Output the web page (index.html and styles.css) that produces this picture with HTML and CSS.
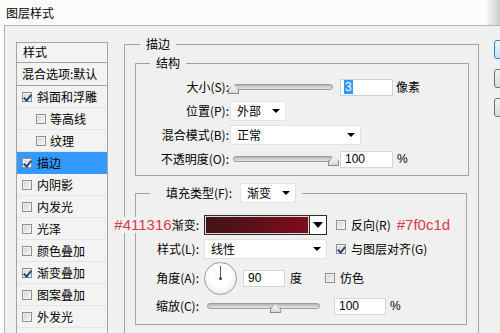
FILE: index.html
```html
<!DOCTYPE html>
<html lang="zh-CN">
<head>
  <meta charset="UTF-8">
  <title>图层样式</title>
  <link rel="stylesheet" href="styles.css">
</head>
<body>
  <div class="titlebar">
    <span class="title">图层样式</span>
    <span class="title-shade"></span>
  </div>

  <div class="dialog">
    <!-- style list -->
    <div class="style-list">
      <div class="list-head">样式</div>
      <div class="list-blend">混合选项:默认</div>
      <div class="list-row"><span class="cb on"></span>斜面和浮雕</div>
      <div class="list-row sub"><span class="cb"></span>等高线</div>
      <div class="list-row sub"><span class="cb"></span>纹理</div>
      <div class="list-row active"><span class="cb on"></span>描边</div>
      <div class="list-row"><span class="cb"></span>内阴影</div>
      <div class="list-row"><span class="cb"></span>内发光</div>
      <div class="list-row"><span class="cb"></span>光泽</div>
      <div class="list-row"><span class="cb"></span>颜色叠加</div>
      <div class="list-row"><span class="cb on"></span>渐变叠加</div>
      <div class="list-row"><span class="cb"></span>图案叠加</div>
      <div class="list-row"><span class="cb"></span>外发光</div>
    </div>

    <!-- stroke settings -->
    <fieldset class="group outer">
      <legend>描边</legend>

      <fieldset class="group struct">
        <legend>结构</legend>
        <div class="row">
          <label class="lbl">大小(S):</label>
          <div class="slider"><div class="track"></div><span class="thumb" style="left:0%"></span></div>
          <div class="field focus"><span class="sel">3</span></div>
          <span class="unit">像素</span>
        </div>
        <div class="row">
          <label class="lbl">位置(P):</label>
          <div class="select w56"><span>外部</span><i class="caret"></i></div>
        </div>
        <div class="row">
          <label class="lbl">混合模式(B):</label>
          <div class="select w131"><span>正常</span><i class="caret"></i></div>
        </div>
        <div class="row">
          <label class="lbl">不透明度(O):</label>
          <div class="slider"><div class="track"></div><span class="thumb" style="left:100%"></span></div>
          <div class="field">100</div>
          <span class="unit pct">%</span>
        </div>
      </fieldset>

      <fieldset class="group fill">
        <legend>
          <label class="lbl">填充类型(F):</label>
          <div class="select w56"><span>渐变</span><i class="caret"></i></div>
        </legend>
        <div class="frow r-grad">
          <label class="lbl"><span class="note">#411316</span>渐变:</label>
          <div class="gradient"><div class="swatch"></div><div class="drop"><i class="caret"></i></div></div>
          <span class="cb"></span><span class="opt">反向(R)</span>
          <span class="note note-right">#7f0c1d</span>
        </div>
        <div class="frow r-style">
          <label class="lbl">样式(L):</label>
          <div class="select w123"><span>线性</span><i class="caret"></i></div>
          <span class="cb on"></span><span class="opt">与图层对齐(G)</span>
        </div>
        <div class="frow r-angle">
          <label class="lbl">角度(A):</label>
          <div class="dial"></div>
          <div class="field small">90</div>
          <span class="unit">度</span>
          <span class="cb dither"></span><span class="opt">仿色</span>
        </div>
        <div class="frow r-scale">
          <label class="lbl">缩放(C):</label>
          <div class="slider wide"><div class="track"></div><span class="thumb" style="left:60%"></span></div>
          <div class="field scale">100</div>
          <span class="unit pct">%</span>
        </div>
      </fieldset>
    </fieldset>

    <div class="buttons">
      <div class="btn primary"></div>
      <div class="btn"></div>
      <div class="btn"></div>
    </div>
  </div>
</body>
</html>
```

FILE: styles.css
```css
* {
  box-sizing: border-box;
}

body {
  margin: 0;
  width: 500px;
  height: 333px;
  overflow: hidden;
  background: #fafafa;
  font-family: "Noto Sans CJK SC", "Noto Sans", sans-serif;
  font-size: 12px;
  line-height: 16px;
  color: #000;
}

/* Title bar */
.titlebar {
  height: 25px;
  display: flex;
  align-items: center;
  justify-content: space-between;
  padding-left: 6px;
  background: #fbfbfb;
}

.title-shade {
  width: 13px;
  height: 25px;
  background: linear-gradient(90deg, #f2f2f2, #cfcfcf);
}

.dialog {
  margin-left: 4px;
  height: 308px;
  display: flex;
  align-items: flex-start;
  padding-left: 11px;
  background: #f0f0f0;
  border-top: 1px solid #b4b4b4;
  border-left: 1px solid #b4b4b4;
}

/* Left list */
.style-list {
  width: 92px;
  height: 300px;
  margin-top: 16px;
  flex: none;
  background: #f3f3f3;
  border: 1px solid #a3a3a3;
}

.list-head {
  height: 20px;
  padding: 1px 0 0 6px;
  border-bottom: 1px solid #a3a3a3;
}

.list-blend {
  height: 23px;
  padding: 3px 0 0 5px;
  border-bottom: 1px solid #a3a3a3;
  white-space: nowrap;
}

.list-row {
  height: 22px;
  display: flex;
  align-items: center;
  gap: 5px;
  padding-left: 5px;
  border-bottom: 1px solid #e4e4e4;
}

.list-row.sub {
  padding-left: 19px;
  gap: 4px;
}

.list-row.active {
  background: #3399ff;
  border-bottom-color: #3399ff;
}

/* Checkbox */
.cb {
  position: relative;
  flex: none;
  width: 10px;
  height: 10px;
  border: 1px solid #8e8f8f;
  background: linear-gradient(135deg, #d2d2d2, #f8f8f8);
  box-shadow: inset 0 0 0 1px #f2f2f2;
}

.cb.on::after {
  content: "";
  position: absolute;
  left: 2px;
  top: 0;
  width: 3px;
  height: 6px;
  border: solid #24447a;
  border-width: 0 2px 2px 0;
  transform: rotate(40deg);
}

/* Group boxes */
.group {
  margin: 0;
  min-width: 0;
  border: 1px solid #a3a3a3;
}

.group legend {
  padding: 0 6px;
  line-height: 16px;
  height: 16px;
}

.outer {
  width: 355px;
  height: 320px;
  margin: 10px 0 0 16px;
  padding: 3px 9px 0 10px;
  flex: none;
}

.outer > legend {
  margin-left: 5px;
}

.struct {
  width: 334px;
  padding: 4px 0 4px 0;
}

.struct > legend {
  margin-left: 14px;
}

.fill {
  width: 332px;
  margin-top: 7px;
  padding: 10px 0 7px 0;
}

.fill > legend {
  margin-left: 14px;
  height: 20px;
  display: flex;
  align-items: center;
}

.fill > legend .lbl {
  width: 76px;
}

.fill > legend .select {
  margin-left: 8px;
}

/* Rows */
.row, .frow {
  display: flex;
  align-items: center;
  height: 24px;
}

.lbl {
  display: flex;
  justify-content: flex-end;
  white-space: nowrap;
  flex: none;
  width: 93px;
}

.frow .lbl {
  width: 63px;
  margin-right: 5px;
}

.r-angle {
  height: 34px;
}

.r-scale {
  height: 22px;
}

.note {
  font-family: "Liberation Sans", Arial, sans-serif;
  font-size: 15px;
  color: #d9394e;
  background: #f0f0f0;
}

.note-right {
  margin-left: 6px;
  background: none;
}

/* Controls */
.select {
  display: flex;
  align-items: center;
  justify-content: space-between;
  height: 20px;
  padding: 0 5px 0 6px;
  background: #fff;
  border: 1px solid #e2e2e2;
}

.struct .select {
  margin-left: 1px;
}

.w56 { width: 56px; }
.w123 { width: 123px; }
.w131 { width: 131px; }

.caret {
  width: 0;
  height: 0;
  border-left: 4px solid transparent;
  border-right: 4px solid transparent;
  border-top: 4px solid #000;
}

.field {
  width: 53px;
  height: 17px;
  margin-left: 7px;
  padding: 0 4px;
  background: #fff;
  border: 1px solid #d6d6d6;
  font-family: "Liberation Sans", Arial, sans-serif;
  font-size: 12px;
  line-height: 15px;
}

.field.focus {
  border-color: #c3d3e4;
  padding-left: 3px;
}

.sel {
  background: #3399ff;
  color: #fff;
  padding: 0 1px;
}

.field.small {
  width: 42px;
  margin-left: 6px;
}

.field.scale {
  width: 52px;
  margin-left: 14px;
}

.unit {
  margin-left: 3px;
}

.unit.pct {
  margin-left: 4px;
  font-family: "Liberation Sans", Arial, sans-serif;
}

.r-angle .unit {
  margin-left: 5px;
}

.opt {
  margin-left: 5px;
  white-space: nowrap;
}

.frow .cb {
  margin-left: 9px;
}

.frow .cb.dither {
  margin-left: 23px;
}

/* Sliders */
.slider {
  position: relative;
  width: 100px;
  height: 20px;
  margin-left: 4px;
  display: flex;
  align-items: center;
}

.slider.wide {
  width: 113px;
  margin-left: 3px;
}

.track {
  width: 100%;
  height: 6px;
  border-radius: 3px;
  border: 1px solid #9c9c9c;
  background: linear-gradient(#b4b4b4, #e8e8e8);
}

.thumb {
  position: absolute;
  top: 8px;
  width: 11px;
  height: 9px;
  margin-left: -5px;
  background: linear-gradient(#fafafa, #dadada);
  border: 1px solid #8a8a8a;
  border-top: none;
  clip-path: polygon(50% 0, 100% 45%, 100% 100%, 0 100%, 0 45%);
}

.thumb::before {
  content: "";
  position: absolute;
  left: -1px;
  top: -1px;
  width: 11px;
  height: 6px;
  background: linear-gradient(to bottom left, transparent 48%, #8a8a8a 50%, transparent 62%) right / 50% 100% no-repeat,
              linear-gradient(to bottom right, transparent 48%, #8a8a8a 50%, transparent 62%) left / 50% 100% no-repeat;
}

/* Gradient picker */
.gradient {
  display: flex;
  width: 123px;
  height: 20px;
  border: 1px solid #2a2a2a;
}

.swatch {
  flex: 1;
  border-right: 1px solid #2a2a2a;
  border: 1px solid #d8d8d8;
  background: linear-gradient(90deg, #411316, #7f0c1d);
}

.drop {
  width: 17px;
  display: flex;
  align-items: center;
  justify-content: center;
  background: #fff;
  border-left: 1px solid #2a2a2a;
}

.drop .caret {
  border-left-width: 5px;
  border-right-width: 5px;
  border-top-width: 6px;
}

/* Angle dial */
.dial {
  position: relative;
  flex: none;
  width: 33px;
  height: 33px;
  border-radius: 50%;
  border: 1px solid #9a9a9a;
  background: radial-gradient(circle at 50% 40%, #ffffff 45%, #dedede 100%);
}

.dial::before {
  content: "";
  position: absolute;
  left: 15px;
  top: 3px;
  width: 1px;
  height: 13px;
  background: #555;
}

.dial::after {
  content: "";
  position: absolute;
  left: 14px;
  top: 14px;
  width: 3px;
  height: 3px;
  border-radius: 50%;
  background: #444;
}

/* Right buttons */
.buttons {
  margin: 14px 0 0 15px;
  display: flex;
  flex-direction: column;
  gap: 10px;
}

.btn {
  width: 40px;
  height: 19px;
  border: 1px solid #707070;
  border-radius: 3px;
  background: linear-gradient(#f2f2f2, #dcdcdc);
}

.btn.primary {
  border-color: #3c7fb1;
  background: linear-gradient(#e8f6fd, #bfe3f6);
}
```
